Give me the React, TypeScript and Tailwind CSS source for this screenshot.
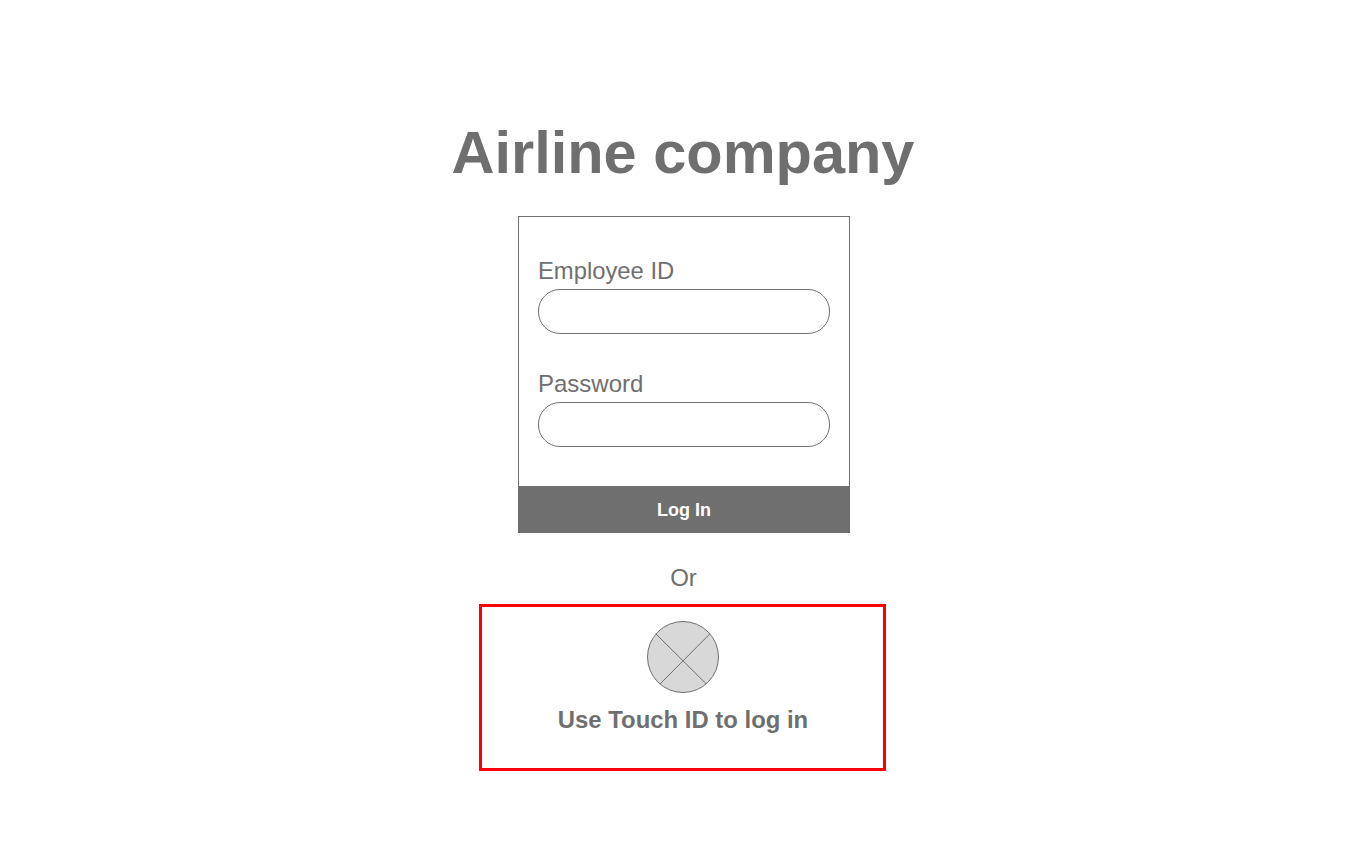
export default function App() {
  return (
    <div className="flex h-[868px] flex-col items-center bg-white font-['Liberation_Sans',Arial,sans-serif] text-[#6f6f6f]">
      <h1 className="mt-[118px] text-[59.5px] font-bold leading-[69px]">Airline company</h1>
      <div className="ml-[2px] mt-[29px] flex h-[317px] w-[332px] flex-col border border-[#6f6f6f]">
        <div className="flex flex-1 flex-col px-[19px] pt-[41px]">
          <label className="text-[23.8px] leading-[26px]">Employee ID</label>
          <div className="mt-[5px] h-[45px] rounded-[22px] border border-[#6f6f6f]" />
          <label className="mt-[37px] text-[24px] leading-[26px]">Password</label>
          <div className="mt-[5px] h-[45px] rounded-[22px] border border-[#6f6f6f]" />
        </div>
        <div className="-mx-px -mb-px flex h-[47px] items-center justify-center bg-[#6f6f6f] pt-[2px] text-[18px] font-bold text-white">
          Log In
        </div>
      </div>
      <p className="ml-px mt-[32px] text-[24px] leading-[26px]">Or</p>
      <div className="mr-[2px] mt-[13px] flex h-[167px] w-[407px] flex-col items-center border-[3px] border-[#ff0000] pt-[13px]">
        <svg className="ml-px" width="74" height="74" viewBox="0 0 74 74">
          <circle cx="37" cy="37" r="35.5" fill="#d8d8d8" stroke="#6f6f6f" />
          <path d="M9.7 13.7 L60 63.7 M64 13.7 L14 64" stroke="#6f6f6f" fill="none" />
        </svg>
        <p className="ml-[2px] mt-[12px] text-[23.9px] font-bold leading-[27px]">Use Touch ID to log in</p>
      </div>
    </div>
  );
}
